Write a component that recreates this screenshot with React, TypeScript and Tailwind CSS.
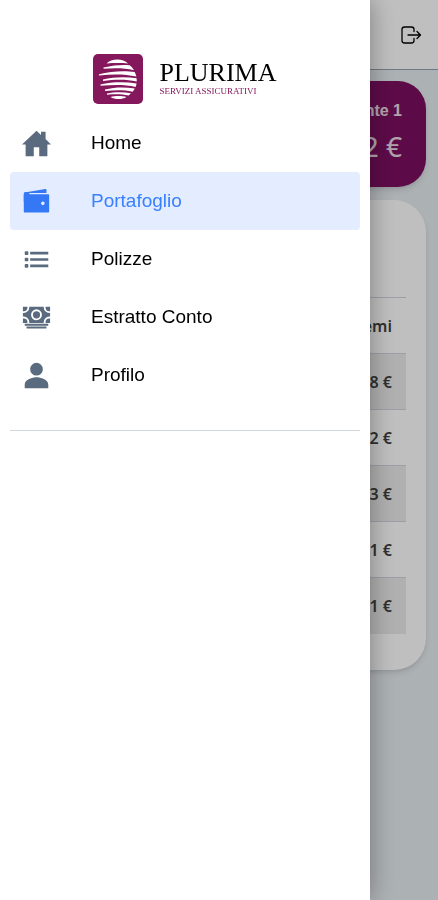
import type { IconType } from "react-icons";
import {
  IoCashSharp,
  IoHomeSharp,
  IoListSharp,
  IoPersonSharp,
  IoWalletSharp,
} from "react-icons/io5";

type MenuItem = {
  label: string;
  href: string;
  icon: IconType;
  active?: boolean;
};

const menuItems: MenuItem[] = [
  { label: "Home", href: "#home", icon: IoHomeSharp },
  { label: "Portafoglio", href: "#portafoglio", icon: IoWalletSharp, active: true },
  { label: "Polizze", href: "#polizze", icon: IoListSharp },
  { label: "Estratto Conto", href: "#estratto-conto", icon: IoCashSharp },
  { label: "Profilo", href: "#profilo", icon: IoPersonSharp },
];

const premi = ["8 €", "2 €", "3 €", "1 €", "1 €"];

function Logo() {
  return (
    <div className="flex items-center justify-center gap-4">
      <svg viewBox="0 0 50 50" className="size-[50px]" aria-hidden="true">
        <rect width="50" height="50" rx="5" fill="#85175c" />
        <g fill="#fff">
          <path d="M13.5 9.5 C18 4.5 30 4 35 9.5 C28 8.8 21 9 13.5 9.5Z" />
          <path d="M10.5 13.6 C20 11 31 10.6 36.5 11.2 C38.5 12.6 40 14.4 41 16.2 C31 13.8 20 14.2 10.5 14.8Z" />
          <path d="M6 20.3 C18 17 32 16.6 41.6 18 C42.5 19.5 43 21 43.4 22.6 C31 19.6 18 20.3 6 21.4Z" />
          <path d="M10 25.6 C21 22.6 33 22.6 43.6 24.2 L43.8 27.6 C33 25 21 25.6 10 27Z" />
          <path d="M7.5 30.4 C19 27.8 32 27.8 43.6 29.4 C43.4 30.6 43 31.8 42.6 32.9 C32 30.4 20 30.8 7.5 31.8Z" />
          <path d="M12 35.6 C22 33 32 33 41.8 34.6 C41.2 35.8 40.4 36.9 39.6 37.8 C31 35.6 22 36 12 37Z" />
          <path d="M14 39.6 C21 37.8 30 37.8 38 39.2 L35.6 41.6 C29 40 21 40.2 14 40.8Z" />
          <path d="M17.5 43 C22 41.8 29 41.8 33.5 43 C29 45.8 22 45.8 17.5 43Z" />
        </g>
      </svg>
      <div className="font-['Liberation_Serif',serif]">
        <p className="text-[26px] leading-6 text-black">PLURIMA</p>
        <p className="text-[9px] leading-3 text-[#85175c]">SERVIZI ASSICURATIVI</p>
      </div>
    </div>
  );
}

function ExitIcon() {
  return (
    <svg
      viewBox="0 0 22 22"
      className="size-[22px]"
      fill="none"
      stroke="currentColor"
      strokeWidth="1.3"
      strokeLinecap="round"
      strokeLinejoin="round"
      aria-hidden="true"
    >
      <path d="M14 7.5 V5.5 A2.5 2.5 0 0 0 11.5 3 H4.5 A2.5 2.5 0 0 0 2 5.5 V16.5 A2.5 2.5 0 0 0 4.5 19 H11.5 A2.5 2.5 0 0 0 14 16.5 V14.5" />
      <path d="M8 11 H20.5 M17 7.5 L20.5 11 L17 14.5" />
    </svg>
  );
}

function Dashboard() {
  return (
    <div>
      <header className="flex h-[70px] items-center justify-end border-b border-gray-400 bg-white px-3">
        <button type="button" aria-label="Esci" className="p-1 text-black">
          <ExitIcon />
        </button>
      </header>

      <main className="space-y-[13px] px-3 py-[11px]">
        <section className="rounded-[28px] bg-[#7d0f60] px-6 pt-4 pb-5 text-right text-white/85 shadow-md">
          <h2 className="font-['Liberation_Sans',sans-serif] text-base leading-7 font-bold">Cliente 1</h2>
          <p className="text-[28px] leading-[42px]">2 €</p>
        </section>

        <section className="rounded-[32px] bg-white px-5 pt-[97px] pb-9 shadow-md">
          <table className="w-full text-right text-base font-semibold text-neutral-700">
            <thead>
              <tr className="h-14 border-t border-gray-300">
                <th className="px-3.5 font-semibold">Premi</th>
              </tr>
            </thead>
            <tbody>
              {premi.map((value, index) => (
                <tr key={index} className="h-14 border-t border-gray-300 odd:bg-[#ebebeb]">
                  <td className="px-3.5">{value}</td>
                </tr>
              ))}
            </tbody>
          </table>
        </section>
      </main>
    </div>
  );
}

function SideMenu() {
  return (
    <aside className="fixed inset-y-0 right-[68px] left-0 bg-white px-2.5 pt-[54px] shadow-[0_0_24px_rgba(0,0,0,0.35)]">
      <Logo />
      <nav className="mt-2.5 border-b border-gray-300 pb-[26px] font-['Liberation_Sans',sans-serif]">
        {menuItems.map(({ label, href, icon: Icon, active }) => (
          <a
            key={label}
            href={href}
            aria-current={active ? "page" : undefined}
            className={`flex h-[58px] items-center gap-10 rounded px-3 text-[19px] ${
              active ? "bg-[#e4ecff] text-[#3880ff]" : "text-black"
            }`}
          >
            <Icon className={`size-[29px] ${active ? "text-[#3478f6]" : "text-[#5a6b7f]"}`} />
            {label}
          </a>
        ))}
      </nav>
    </aside>
  );
}

export default function App() {
  return (
    <div className="min-h-screen bg-[#e6ecf0] font-['Noto_Sans',sans-serif]">
      <Dashboard />
      <div className="fixed inset-0 bg-black/25" />
      <SideMenu />
    </div>
  );
}
